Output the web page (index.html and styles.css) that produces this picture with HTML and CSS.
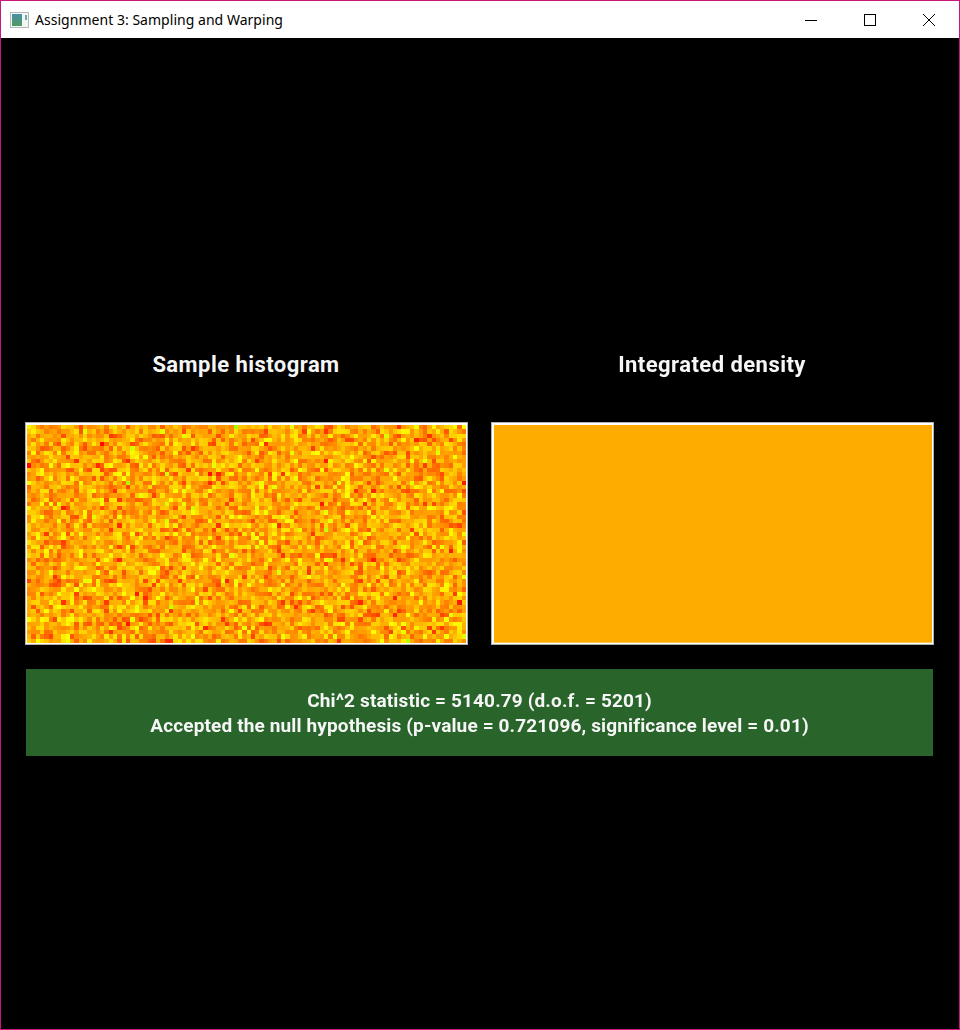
FILE: index.html
```html
<!DOCTYPE html>
<html lang="en">
<head>
    <meta charset="UTF-8">
    <meta name="viewport" content="width=device-width, initial-scale=1.0">
    <title>Assignment 3: Sampling and Warping</title>
    <link rel="stylesheet" href="styles.css">
</head>
<body>
    <div class="window">
        <div class="titlebar">
            <svg class="app-icon" width="19" height="16" viewBox="0 0 19 16">
                <defs>
                    <linearGradient id="paneFill" x1="0" y1="0" x2="0" y2="1">
                        <stop offset="0" stop-color="#4a8fa6"/>
                        <stop offset="1" stop-color="#4f9a60"/>
                    </linearGradient>
                </defs>
                <rect x="0.5" y="0.5" width="18" height="15" fill="#f4f6f6" stroke="#b4b8ba"/>
                <rect x="2" y="2" width="10" height="12" fill="url(#paneFill)"/>
                <rect x="15" y="3" width="2" height="5" fill="#6fa8b0"/>
            </svg>
            <span class="window-title">Assignment 3: Sampling and Warping</span>
            <div class="controls">
                <div class="control">
                    <svg width="12" height="12" viewBox="0 0 12 12"><path d="M0 6.5H12" stroke="#000" fill="none"/></svg>
                </div>
                <div class="control">
                    <svg width="12" height="12" viewBox="0 0 12 12"><rect x="0.5" y="0.5" width="11" height="11" stroke="#000" fill="none"/></svg>
                </div>
                <div class="control">
                    <svg width="12" height="12" viewBox="0 0 12 12"><path d="M0 0L12 12M12 0L0 12" stroke="#000" fill="none"/></svg>
                </div>
            </div>
        </div>
        <div class="content">
            <div class="plots">
                <div class="plot">
                    <h2>Sample histogram</h2>
                    <div class="frame"><canvas id="histogram" width="439" height="218"></canvas></div>
                </div>
                <div class="plot">
                    <h2>Integrated density</h2>
                    <div class="frame"><div class="density"></div></div>
                </div>
            </div>
            <div class="result">
                Chi^2 statistic = 5140.79 (d.o.f. = 5201)<br>
                Accepted the null hypothesis (p-value = 0.721096, significance level = 0.01)
            </div>
        </div>
    </div>
    <script src="script.js"></script>
</body>
</html>
```

FILE: styles.css
```css
html, body {
    height: 100%;
    margin: 0;
}
.window {
    height: 100%;
    box-sizing: border-box;
    display: flex;
    flex-direction: column;
    border: 1px solid #c8187f;
    background-color: #000;
}
.titlebar {
    height: 37px;
    flex-shrink: 0;
    display: flex;
    align-items: center;
    background-color: #fff;
    padding-left: 9px;
    padding-right: 1px;
}
.app-icon {
    margin-right: 6px;
}
.window-title {
    font-family: "Noto Sans", sans-serif;
    font-size: 14px;
    letter-spacing: 0.03px;
    color: #000;
}
.controls {
    margin-left: auto;
    display: flex;
    height: 100%;
}
.control {
    width: 59px;
    display: flex;
    align-items: center;
    justify-content: center;
}
.content {
    padding: 304px 25px 0 24px;
}
.plots {
    display: grid;
    grid-template-columns: 443px 443px;
    column-gap: 23px;
}
.plot h2 {
    margin: 0 1px 0 0;
    height: 80px;
    font-family: Roboto, sans-serif;
    font-size: 22px;
    font-weight: 700;
    letter-spacing: 0.45px;
    line-height: 46px;
    text-align: center;
    color: #f6f6f6;
}
.frame {
    height: 223px;
    box-sizing: border-box;
    border: 1px solid #b0b0b0;
    padding: 2px 1px 1px;
    background-color: #fff;
}
#histogram {
    display: block;
}
.density {
    height: 218px;
    box-sizing: border-box;
    border-left: 1px solid #fff;
    border-bottom: 1px solid #ffc850;
    background-color: #ffac00;
}
.result {
    margin: 24px 0 0 1px;
    width: 907px;
    height: 87px;
    box-sizing: border-box;
    padding-top: 19px;
    background-color: #29652b;
    font-family: Roboto, sans-serif;
    font-size: 19px;
    font-weight: 700;
    letter-spacing: 0.14px;
    line-height: 25px;
    text-align: center;
    color: #f6f6f6;
}
```

FILE: script.js
```js
document.addEventListener('DOMContentLoaded', function() {
    const canvas = document.getElementById('histogram');
    const ctx = canvas.getContext('2d');
    const cols = 102;
    const rows = 51;

    // small seeded generator, so the noise is the same on every load
    let seed = 20240;
    function random() {
        seed = (seed * 1664525 + 1013904223) % 4294967296;
        return seed / 4294967296;
    }
    function gauss() {
        return Math.sqrt(-2 * Math.log(random() + 1e-9)) * Math.cos(2 * Math.PI * random());
    }

    for (let y = 0; y < rows; y++) {
        for (let x = 0; x < cols; x++) {
            const hue = Math.max(2, Math.min(100, 39 + gauss() * 11));
            ctx.fillStyle = `hsl(${hue}, 100%, 50%)`;
            const x0 = Math.round(x * canvas.width / cols);
            const x1 = Math.round((x + 1) * canvas.width / cols);
            const y0 = Math.round(y * canvas.height / rows);
            const y1 = Math.round((y + 1) * canvas.height / rows);
            ctx.fillRect(x0, y0, x1 - x0, y1 - y0);
        }
    }
});
```
